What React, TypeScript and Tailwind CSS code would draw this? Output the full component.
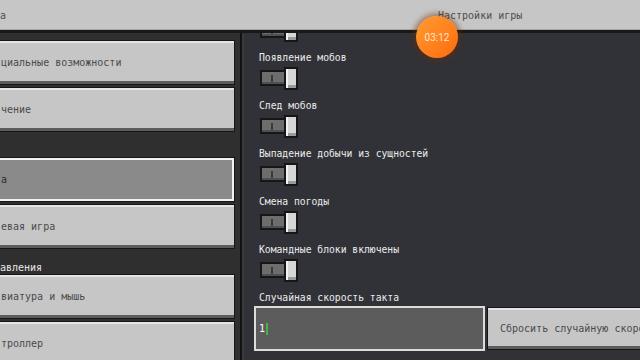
import React from 'react';

type NavItem =
  | { kind: 'button'; label: string; selected?: boolean }
  | { kind: 'section'; label: string };

const nav: NavItem[] = [
  { kind: 'button', label: 'циальные возможности' },
  { kind: 'button', label: 'чение' },
  { kind: 'section', label: '' },
  { kind: 'button', label: 'а', selected: true },
  { kind: 'button', label: 'евая игра' },
  { kind: 'section', label: 'авления' },
  { kind: 'button', label: 'виатура и мышь' },
  { kind: 'button', label: 'троллер' },
];

const toggles = [
  'Появление мобов',
  'След мобов',
  'Выпадение добычи из сущностей',
  'Смена погоды',
  'Командные блоки включены',
];

function Toggle({ className = '' }: { className?: string }) {
  return (
    <div className={`flex h-[22px] w-[38px] shrink-0 items-center ${className}`}>
      <div className="flex h-[16px] w-[27px] items-center justify-center border-2 border-[#161616] bg-[#6d6d6d] pr-[2px] shadow-[inset_0_-2px_0_#505050]">
        <div className="h-[7px] w-[2px] bg-[#3a3a3a]" />
      </div>
      <div className="-ml-[2px] h-[23px] w-[15px] border-2 border-[#161616] bg-[#d6d6d6] shadow-[inset_2px_0_0_#f2f2f2,inset_0_-3px_0_#9a9a9a]" />
    </div>
  );
}

function MenuButton({ label, selected }: { label: string; selected?: boolean }) {
  return (
    <div
      className={`-ml-[3px] flex h-[45px] w-[238px] shrink-0 items-center border border-[#161616] pl-[3px] text-[10px] ${
        selected
          ? 'bg-[#8a8a8a] text-[#2e2e2e] shadow-[inset_0_0_0_2px_#f2f2f2]'
          : 'bg-[#c6c6c6] text-[#4a4a4a] shadow-[inset_0_2px_0_#e4e4e4,inset_0_-3px_0_#5c5c5c]'
      }`}
    >
      {label}
    </div>
  );
}

export default function App() {
  return (
    <div className="relative h-[360px] w-[640px] overflow-hidden bg-[#313237] font-['DejaVu_Sans_Mono',monospace]">
      <div className="flex h-[33px] items-center border-b-[3px] border-[#181818] bg-[#c6c6c6] text-[10px] text-[#4e4e4e] shadow-[inset_0_-1px_0_#a6a6a6]">
        <span className="w-[438px]">а</span>
        <span>Настройки игры</span>
      </div>

      <div className="flex h-[327px]">
        <div className="flex w-[240px] shrink-0 flex-col gap-[2px] overflow-hidden bg-[#2f2f2f] pt-[7px]">
          {nav.map((item, i) =>
            item.kind === 'button' ? (
              <MenuButton key={i} label={item.label} selected={item.selected} />
            ) : (
              <div key={i} className="-my-[2px] flex h-[25px] shrink-0 items-end text-[10px] leading-[12px] text-[#e6e6e6]">
                {item.label}
              </div>
            )
          )}
        </div>
        <div className="w-[2px] shrink-0 bg-[#121212]" />
        <div className="w-[2px] shrink-0 bg-[#3a3a3a]" />

        <div className="flex flex-1 flex-col overflow-hidden pl-[15px] text-[9.7px] text-[#ececec]">
          <Toggle className="-mt-[14px] ml-[1px]" />
          <div className="mt-[7px] flex flex-col">
            {toggles.map((t) => (
              <div key={t} className="flex h-[48px] shrink-0 flex-col">
                <div className="flex h-[16px] items-center pt-[4px]">{t}</div>
                <Toggle className="mt-[3px] ml-[1px]" />
              </div>
            ))}
            <div className="flex h-[16px] shrink-0 items-center pt-[4px]">Случайная скорость такта</div>
            <div className="-ml-[5px] mt-[2px] flex shrink-0 items-start gap-[2px]">
              <div className="flex h-[45px] w-[231px] shrink-0 items-center border-2 border-[#dcdcdc] bg-[#5c5c5c] pl-[3px] text-[10px] text-white">
                <span>1</span>
                <span className="ml-[1px] h-[12px] w-[2px] bg-[#45b34d]" />
              </div>
              <div className="mt-[1px] flex h-[43px] w-[200px] shrink-0 items-center overflow-hidden whitespace-nowrap border border-[#161616] bg-[#c6c6c6] pl-[12px] text-[10px] text-[#4a4a4a] shadow-[inset_0_2px_0_#e4e4e4,inset_0_-3px_0_#5c5c5c]">
                Сбросить случайную скоро
              </div>
            </div>
          </div>
        </div>
      </div>

      <div className="absolute left-[416px] top-[16px] flex h-[42px] w-[42px] items-center justify-center rounded-full bg-gradient-to-br from-[#ff9b2e] to-[#ff6a0a] font-['Roboto',sans-serif] text-[10px] text-[#ffe6cc] shadow-[0_0_5px_3px_rgba(110,45,0,0.45)]">
        03:12
      </div>
    </div>
  );
}
